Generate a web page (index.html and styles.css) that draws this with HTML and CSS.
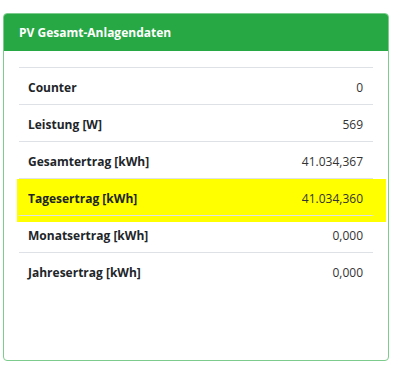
FILE: index.html
```html
<!DOCTYPE html>
<html lang="de">
<head>
<meta charset="utf-8">
<title>PV Gesamt-Anlagendaten</title>
<link rel="stylesheet" href="styles.css">
</head>
<body>
<div class="card">
  <div class="card-header">PV Gesamt-Anlagendaten</div>
  <div class="card-body">
    <div class="table">
      <div class="row"><span class="label">Counter</span><span class="value">0</span></div>
      <div class="row"><span class="label">Leistung [W]</span><span class="value">569</span></div>
      <div class="row"><span class="label">Gesamtertrag [kWh]</span><span class="value">41.034,367</span></div>
      <div class="row highlight"><span class="label">Tagesertrag [kWh]</span><span class="value">41.034,360</span></div>
      <div class="row"><span class="label">Monatsertrag [kWh]</span><span class="value">0,000</span></div>
      <div class="row"><span class="label">Jahresertrag [kWh]</span><span class="value">0,000</span></div>
    </div>
  </div>
</div>
</body>
</html>
```
FILE: styles.css
```css
html, body {
  margin: 0;
  padding: 0;
  background: #ffffff;
}
body {
  padding: 13px 11px 0 3px;
  font-family: "Open Sans", "Noto Sans", "Liberation Sans", sans-serif;
  font-size: 12px;
  color: #212529;
}
.card {
  height: 348px;
  box-sizing: border-box;
  border: 1px solid #7dcc8d;
  border-radius: 4px;
  overflow: hidden;
  display: flex;
  flex-direction: column;
}
.card-header {
  background: #28a745;
  color: #ffffff;
  font-weight: 700;
  font-size: 12px;
  height: 38px;
  display: flex;
  align-items: center;
  margin: -1px -1px 0 -1px;
  padding: 0 15px 0 16px;
}
.card-body {
  padding: 16px 15px 15px 15px;
}
.table {
  display: flex;
  flex-direction: column;
  position: relative;
  z-index: 0;
}
.row {
  box-sizing: border-box;
  display: flex;
  justify-content: space-between;
  align-items: center;
  height: 37px;
  padding: 2px 10px 0 9px;
  border-top: 1px solid #dee2e6;
  position: relative;
}
.label {
  font-weight: 700;
}
.value {
  color: #333333;
}
.highlight::before {
  content: "";
  position: absolute;
  top: 0;
  left: -2px;
  right: -13px;
  bottom: -7px;
  background: #ffff00;
  z-index: -1;
}
```
